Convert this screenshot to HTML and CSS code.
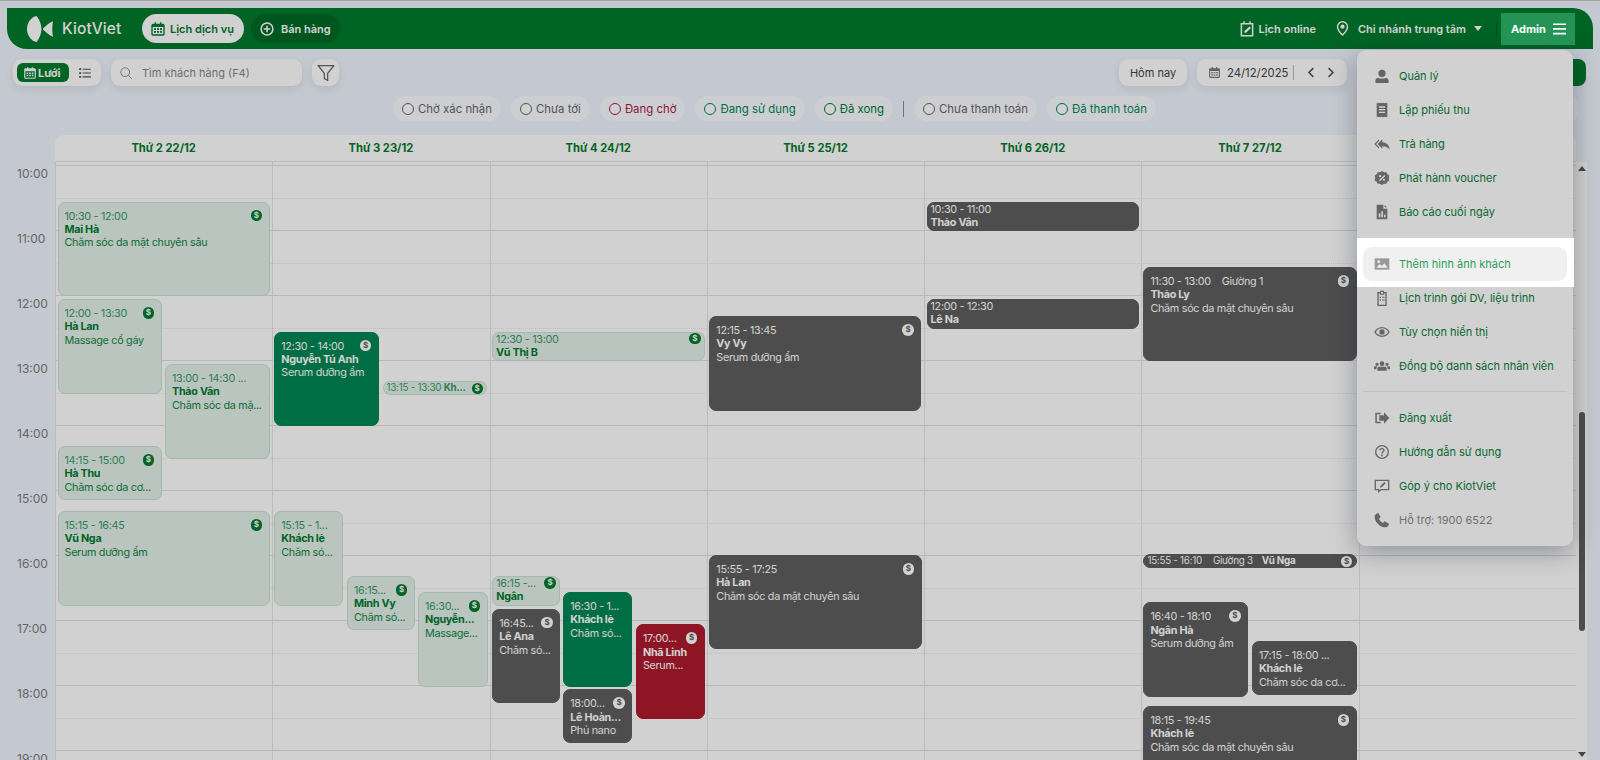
FILE: index.html
```html
<!DOCTYPE html>
<html lang="vi">
<head>
<meta charset="utf-8">
<title>KiotViet - Lịch dịch vụ</title>
<link rel="stylesheet" href="styles.css">
</head>
<body>
<div class="page">
  <header class="topbar">
    <div class="logo">
      <svg class="logo-mark" viewBox="0 0 28 27"><path d="M10 0C4 1 0 7 0 13.500S4 26 10 27c3-4 5-9 5-13.500S13 4 10 0z"/><path d="M27 5.500C23 7 20 10 17 12.500q-1 1 0 2C20 17 23 20 27 21.500c-1-4.500-1-11.500 0-16z"/></svg>
      <span class="logo-text">KiotViet</span>
    </div>
    <a class="pill pill-on"><svg class="ic" viewBox="0 0 24 24"><path d="M7 2h2v2h6V2h2v2h2.500A2.500 2.500 0 0 1 22 6.500v13a2.500 2.500 0 0 1-2.500 2.500h-15A2.500 2.500 0 0 1 2 19.500v-13A2.500 2.500 0 0 1 4.500 4H7V2zM4 9v10.500a.5.5 0 0 0 .5.5h15a.5.5 0 0 0 .5-.5V9H4zm2 2h3v2.500H6V11zm4.500 0h3v2.500h-3V11zM15 11h3v2.500h-3V11zm-9 4h3v2.500H6V15zm4.500 0h3v2.500h-3V15zm4.500 0h3v2.500h-3V15z"/></svg>Lịch dịch vụ</a>
    <a class="pill pill-dark"><svg class="ic" viewBox="0 0 24 24"><path d="M12 2a10 10 0 1 1 0 20 10 10 0 0 1 0-20zm0 2.300a7.700 7.700 0 1 0 0 15.400 7.700 7.700 0 0 0 0-15.400zM10.800 7h2.400v3.800H17v2.400h-3.800V17h-2.400v-3.800H7v-2.400h3.800V7z"/></svg>Bán hàng</a>
    <div class="top-right">
      <a class="top-link online"><svg class="ic" viewBox="0 0 24 24"><path d="M7 1.500h2V4h6V1.500h2V4h3.500v18h-17V4H7V1.500zM5.500 6v14h13V6h-13zm9.800 2.500 2 2-6.500 6.500H8.500v-2.300l6.800-6.200z"/></svg>Lịch online</a>
      <a class="top-link branch"><svg class="ic" viewBox="0 0 24 24"><path d="M12 1.500a8 8 0 0 1 8 8c0 5-5 10.500-8 13-3-2.500-8-8-8-13a8 8 0 0 1 8-8zm0 2a6 6 0 0 0-6 6c0 3.500 3.300 7.700 6 10.300 2.700-2.600 6-6.800 6-10.300a6 6 0 0 0-6-6zm0 3a3 3 0 1 1 0 6 3 3 0 0 1 0-6z"/></svg>Chi nhánh trung tâm<i class="caret"></i></a>
      <span class="top-sep"></span>
      <button class="admin">Admin<svg class="burger" viewBox="0 0 14 12"><path d="M0 0h14v1.800H0zM0 5h14v1.800H0zM0 10h14v1.800H0z"/></svg></button>
    </div>
  </header>

  <div class="toolbar">
    <div class="box view-switch">
      <span class="view-on"><svg class="ic" viewBox="0 0 24 24"><path d="M7 2h2v2h6V2h2v2h2.500A2.500 2.500 0 0 1 22 6.500v13a2.500 2.500 0 0 1-2.500 2.500h-15A2.500 2.500 0 0 1 2 19.500v-13A2.500 2.500 0 0 1 4.500 4H7V2zM4 9v10.500a.5.5 0 0 0 .5.5h15a.5.5 0 0 0 .5-.5V9H4zm2 2h3v2.500H6V11zm4.500 0h3v2.500h-3V11zM15 11h3v2.500h-3V11zm-9 4h3v2.500H6V15zm4.500 0h3v2.500h-3V15zm4.500 0h3v2.500h-3V15z"/></svg>Lưới</span>
      <svg class="ic list-ic" viewBox="0 0 24 24"><path d="M2 4h3.500v3H2zM8 4.500h14v2H8zM2 10.500h3.500v3H2zM8 11h14v2H8zM2 17h3.500v3H2zM8 17.500h14v2H8z"/></svg>
    </div>
    <div class="box search"><svg class="line-ic" viewBox="0 0 24 24"><circle cx="10.500" cy="10.500" r="7.500"/><path d="m16 16 6 6"/></svg>Tìm khách hàng (F4)</div>
    <div class="box square"><svg class="line-ic filter-ic" viewBox="0 0 24 24"><path d="M2.500 3h19L14 12.500V21l-4-2.500v-6z"/></svg></div>
    <div class="box today">Hôm nay</div>
    <div class="box date">
      <svg class="ic" viewBox="0 0 24 24"><path d="M7 2h2v2h6V2h2v2h2.500A2.500 2.500 0 0 1 22 6.500v13a2.500 2.500 0 0 1-2.500 2.500h-15A2.500 2.500 0 0 1 2 19.500v-13A2.500 2.500 0 0 1 4.500 4H7V2zM4 9v10.500a.5.5 0 0 0 .5.5h15a.5.5 0 0 0 .5-.5V9H4zm2 2h3v2.500H6V11zm4.500 0h3v2.500h-3V11zM15 11h3v2.500h-3V11zm-9 4h3v2.500H6V15zm4.500 0h3v2.500h-3V15zm4.500 0h3v2.500h-3V15z"/></svg>
      <span class="date-text">24/12/2025</span><span class="date-sep"></span>
      <svg class="chev" viewBox="0 0 10 14"><path d="M8 1.500 2.500 7 8 12.500"/></svg>
      <svg class="chev" viewBox="0 0 10 14"><path d="M2 1.500 7.500 7 2 12.500"/></svg>
    </div>
    <div class="add-btn"></div>
  </div>

  <div class="chips">
    <span class="chip c-gray"><i></i>Chờ xác nhận</span>
    <span class="chip c-gray"><i></i>Chưa tới</span>
    <span class="chip c-red"><i></i>Đang chờ</span>
    <span class="chip c-teal"><i></i>Đang sử dụng</span>
    <span class="chip c-green"><i></i>Đã xong</span>
    <span class="chip-sep"></span>
    <span class="chip c-gray"><i></i>Chưa thanh toán</span>
    <span class="chip c-teal"><i></i>Đã thanh toán</span>
    <span class="chip-end"></span>
  </div>

  <section class="calendar">
    <div></div>
    <div class="heads">
      <div>Thứ 2 22/12</div><div>Thứ 3 23/12</div><div>Thứ 4 24/12</div><div>Thứ 5 25/12</div><div>Thứ 6 26/12</div><div>Thứ 7 27/12</div><div></div>
    </div>
    <div></div>

    <div class="times">
      <div>10:00</div><div>11:00</div><div>12:00</div><div>13:00</div><div>14:00</div><div>15:00</div><div>16:00</div><div>17:00</div><div>18:00</div><div>19:00</div>
    </div>

    <div class="board">
      <div class="lines">
        <div></div><div></div><div></div><div></div><div></div><div></div><div></div><div></div><div></div><div></div>
      </div>
      <div class="days">
        <div class="day">
          <article class="ev light" style="left:2.500px;top:39.500px;width:212px;height:94.500px"><b class="pay">$</b><p class="t">10:30 - 12:00</p><p class="n">Mai Hà</p><p>Chăm sóc da mặt chuyên sâu</p></article>
          <article class="ev light" style="left:2.500px;top:137px;width:104px;height:94.500px"><b class="pay">$</b><p class="t">12:00 - 13:30</p><p class="n">Hà Lan</p><p>Massage cổ gáy</p></article>
          <article class="ev light" style="left:110px;top:202px;width:104.500px;height:94.500px"><p class="t">13:00 - 14:30 ...</p><p class="n">Thảo Vân</p><p>Chăm sóc da mặ...</p></article>
          <article class="ev light" style="left:2.500px;top:284px;width:104px;height:53.700px"><b class="pay">$</b><p class="t">14:15 - 15:00</p><p class="n">Hà Thu</p><p>Chăm sóc da cơ...</p></article>
          <article class="ev light" style="left:2.500px;top:349px;width:212px;height:94.500px"><b class="pay">$</b><p class="t">15:15 - 16:45</p><p class="n">Vũ Nga</p><p>Serum dưỡng ẩm</p></article>
        </div>
        <div class="day">
          <article class="ev green" style="left:2px;top:169.500px;width:104.700px;height:94.500px"><b class="pay">$</b><p class="t">12:30 - 14:00</p><p class="n">Nguyễn Tú Anh</p><p>Serum dưỡng ẩm</p></article>
          <article class="ev light strip" style="left:110.300px;top:219px;width:104.500px;height:14px"><b class="pay">$</b><p class="t">13:15 - 13:30 <strong>Kh...</strong></p></article>
          <article class="ev light" style="left:2px;top:349px;width:68.700px;height:94.500px"><p class="t">15:15 - 1...</p><p class="n">Khách lẻ</p><p>Chăm só...</p></article>
          <article class="ev light" style="left:74.700px;top:414px;width:68px;height:53.700px"><b class="pay">$</b><p class="t">16:15...</p><p class="n">Minh Vy</p><p>Chăm só...</p></article>
          <article class="ev light" style="left:145.700px;top:430px;width:69.700px;height:94.700px"><b class="pay">$</b><p class="t">16:30...</p><p class="n">Nguyễn...</p><p>Massage...</p></article>
        </div>
        <div class="day">
          <article class="ev light short" style="left:2.500px;top:169.500px;width:213px;height:29.500px"><b class="pay">$</b><p class="t">12:30 - 13:00</p><p class="n">Vũ Thị B</p></article>
          <article class="ev light short" style="left:2.700px;top:414px;width:68px;height:29.700px"><b class="pay">$</b><p class="t">16:15 -...</p><p class="n">Ngân</p></article>
          <article class="ev gray" style="left:2.700px;top:446.700px;width:68px;height:94.600px"><b class="pay">$</b><p class="t">16:45...</p><p class="n">Lê Ana</p><p>Chăm só...</p></article>
          <article class="ev green" style="left:73.700px;top:430px;width:69px;height:94.700px"><p class="t">16:30 - 1...</p><p class="n">Khách lẻ</p><p>Chăm só...</p></article>
          <article class="ev gray" style="left:73.700px;top:527.300px;width:69px;height:53.700px"><b class="pay">$</b><p class="t">18:00...</p><p class="n">Lê Hoàn...</p><p>Phủ nano</p></article>
          <article class="ev red" style="left:146.400px;top:462.300px;width:69px;height:94.700px"><b class="pay">$</b><p class="t">17:00...</p><p class="n">Nhã Linh</p><p>Serum...</p></article>
        </div>
        <div class="day">
          <article class="ev gray" style="left:2.500px;top:154px;width:212px;height:95px"><b class="pay">$</b><p class="t">12:15 - 13:45</p><p class="n">Vy Vy</p><p>Serum dưỡng ẩm</p></article>
          <article class="ev gray" style="left:2.500px;top:393px;width:212.400px;height:94px"><b class="pay">$</b><p class="t">15:55 - 17:25</p><p class="n">Hà Lan</p><p>Chăm sóc da mặt chuyên sâu</p></article>
        </div>
        <div class="day">
          <article class="ev gray short" style="left:2.400px;top:40px;width:212.700px;height:29px"><p class="t">10:30 - 11:00</p><p class="n">Thảo Vân</p></article>
          <article class="ev gray short" style="left:2.400px;top:137px;width:212.700px;height:30px"><p class="t">12:00 - 12:30</p><p class="n">Lê Na</p></article>
        </div>
        <div class="day">
          <article class="ev gray" style="left:2px;top:105px;width:213.300px;height:94px"><b class="pay">$</b><p class="t">11:30 - 13:00<span class="bed">Giường 1</span></p><p class="n">Thảo Ly</p><p>Chăm sóc da mặt chuyên sâu</p></article>
          <article class="ev gray strip" style="left:2px;top:392px;width:213.300px;height:14px"><b class="pay">$</b><p class="t">15:55 - 16:10<span class="bed">Giường 3</span><strong class="who">Vũ Nga</strong></p></article>
          <article class="ev gray" style="left:2px;top:440.300px;width:104.600px;height:94.700px"><b class="pay">$</b><p class="t">16:40 - 18:10</p><p class="n">Ngân Hà</p><p>Serum dưỡng ẩm</p></article>
          <article class="ev gray" style="left:110.600px;top:479px;width:104.700px;height:54px"><p class="t">17:15 - 18:00 ...</p><p class="n">Khách lẻ</p><p>Chăm sóc da cơ...</p></article>
          <article class="ev gray" style="left:2px;top:544px;width:213.300px;height:94.500px"><b class="pay">$</b><p class="t">18:15 - 19:45</p><p class="n">Khách lẻ</p><p>Chăm sóc da mặt chuyên sâu</p></article>
        </div>
        <div class="day"></div>
      </div>
    </div>

    <div class="scroll"><i class="up"></i><i class="thumb"></i><i class="down"></i></div>
  </section>

  <nav class="menu">
    <a class="mi"><svg viewBox="0 0 24 24"><path d="M12 2.500a5.500 5.500 0 1 1 0 11 5.500 5.500 0 0 1 0-11zM6 14.500c1.500 1 3.800 1.300 6 1.300s4.500-.3 6-1.300c2.500.5 4 2.500 4 5V21a1.500 1.500 0 0 1-1.500 1.500h-17A1.500 1.500 0 0 1 2 21v-1.500c0-2.500 1.500-4.500 4-5z"/></svg>Quản lý</a>
    <a class="mi"><svg viewBox="0 0 24 24"><path d="M4 1l1.500 1L7 1l1.500 1L10 1l2 1 2-1 1.500 1L17 1l1.500 1L20 1v22l-1.500-1-1.500 1-1.500-1-1.500 1-2-1-2 1-1.500-1L7 23l-1.500-1L4 23V1zm3.500 5.500v2h9v-2h-9zm0 4v2h9v-2h-9zm0 4v2h9v-2h-9z"/></svg>Lập phiếu thu</a>
    <a class="mi"><svg viewBox="0 0 24 24"><path d="M7.500 5v2.500L3 12l4.500 4.500V19L.5 12 7.500 5zm5 0v4.200c6 .3 10.500 3.800 11 11.300-2-3.500-5.500-5.300-11-5.300V19l-7-7 7-7z"/></svg>Trả hàng</a>
    <a class="mi"><svg viewBox="0 0 24 24"><path d="M12 1.500l3 2 3.500-.2 1.500 3.200 3 1.800-.8 3.700.8 3.700-3 1.800-1.500 3.200-3.500-.2-3 2-3-2-3.500.2L4 17.500l-3-1.800.8-3.700L1 8.300l3-1.800 1.500-3.200 3.500.2 3-2zM15.500 7.500 7.500 15.500l1.500 1.500 8-8-1.500-1.500zM9 7.500a1.700 1.700 0 1 0 0 3.400 1.700 1.700 0 0 0 0-3.400zm6 5.600a1.700 1.700 0 1 0 0 3.400 1.700 1.700 0 0 0 0-3.400z"/></svg>Phát hành voucher</a>
    <a class="mi"><svg viewBox="0 0 24 24"><path d="M4 1h10v6h6v16H4V1zm12 .5L19.500 5H16V1.500zM7 14v6h2.500v-6H7zm4-3v9h2.500v-9H11zm4 5v4h2.500v-4H15z"/></svg>Báo cáo cuối ngày</a>
    <div class="spot">
      <a class="mi mi-on"><svg viewBox="0 0 24 24"><path d="M1 3.500h22v17H1z"/><path class="mount" d="M3.500 17.500l5-5.500 3.500 3 3.500-4 5 6.500zM7 6.500a2 2 0 1 1 0 4 2 2 0 0 1 0-4z"/></svg>Thêm hình ảnh khách</a>
    </div>
    <a class="mi"><svg viewBox="0 0 24 24"><path d="M9 1h6v2h4v21H5V3h4V1zm1.500 2v2.500h3V3h-3zM7 5v17h10V5h-1.500v2h-7V5H7zm1.500 5h2v2h-2v-2zm3.500.300h4v1.500h-4v-1.500zM8.500 14h2v2h-2v-2zm3.500.300h4v1.500h-4v-1.500z"/></svg>Lịch trình gói DV, liệu trình</a>
    <a class="mi"><svg viewBox="0 0 24 24"><path d="M12 4.500c5.500 0 9.500 3.500 11.500 7.500-2 4-6 7.500-11.500 7.500S2.500 16 .5 12c2-4 6-7.500 11.500-7.500zm0 2c-4.200 0-7.500 2.500-9.200 5.500 1.700 3 5 5.500 9.200 5.500s7.500-2.500 9.200-5.500c-1.700-3-5-5.500-9.200-5.500zm0 1.500a4 4 0 1 1 0 8 4 4 0 0 1 0-8z"/></svg>Tùy chọn hiển thị</a>
    <a class="mi"><svg viewBox="0 0 24 24"><path d="M12 5a3.500 3.500 0 1 1 0 7 3.500 3.500 0 0 1 0-7zM4.500 7a2.500 2.500 0 1 1 0 5 2.500 2.500 0 0 1 0-5zm15 0a2.500 2.500 0 1 1 0 5 2.500 2.500 0 0 1 0-5zM7 13h10c1.500 0 2 1.500 2 3v3H5v-3c0-1.500.5-3 2-3zM0 14c0-1 1-1.500 2-1.500h2.500C4 13.500 3.500 15 3.500 17H0v-3zm24 0v3h-3.500c0-2-.5-3.500-1-4.500H22c1 0 2 .5 2 1.500z"/></svg>Đồng bộ danh sách nhân viên</a>
    <hr class="mdiv">
    <a class="mi"><svg viewBox="0 0 24 24"><path d="M2 4h8v2.200H4.200v11.600H10V20H2V4zm13-.5 8 8.500-8 8.500V16H8V8h7V3.500z"/></svg>Đăng xuất</a>
    <a class="mi"><svg viewBox="0 0 24 24"><path d="M12 1.500a10.500 10.500 0 1 1 0 21 10.500 10.500 0 0 1 0-21zm0 2a8.500 8.500 0 1 0 0 17 8.500 8.500 0 0 0 0-17zM12 6c2.500 0 4 1.500 4 3.500 0 1.700-1 2.500-2 3.200-.8.500-1 .8-1 1.800h-2c0-1.800.6-2.600 1.800-3.400.8-.5 1.200-.9 1.200-1.600 0-.9-.8-1.500-2-1.500s-2 .7-2.200 1.700l-2-.4C8.200 7.300 9.800 6 12 6zm-1.200 9.800h2.400v2.400h-2.400v-2.400z"/></svg>Hướng dẫn sử dụng</a>
    <a class="mi"><svg viewBox="0 0 24 24"><path d="M1 2.500h22v16H11l-5 4v-4H1v-16zm2 2v12h5v1.800l2.300-1.800H21v-12H3zm12.500 1.500 2 2-6 6-2.500.5.500-2.500 6-6z"/></svg>Góp ý cho KiotViet</a>
    <a class="mi mi-muted"><svg viewBox="0 0 24 24"><path d="M6.500 1.500 10 8 7.500 10.500c1.300 2.800 3.200 4.700 6 6L16 14l6.500 3.500c-.3 3-2.500 5.500-5.500 5.500C9 23 1 15 1 7c0-3 2.500-5.200 5.500-5.500z"/></svg>Hỗ trợ: 1900 6522</a>
  </nav>
</div>
</body>
</html>
```
FILE: styles.css
```css
* { box-sizing: border-box; }
html, body { margin: 0; height: 760px; overflow: hidden; }
body { font-family: Inter, "Noto Sans", sans-serif; font-size: 12px; color: #333; background: #f0f5fe; }
p { margin: 0; }

.page { height: 760px; display: flex; flex-direction: column; border-top: 1px solid #c9c9c9; }

/* top bar */
.topbar { height: 41px; margin: 7px 7px 0; flex: none; display: flex; align-items: center; background: #007a2e; border-radius: 0 20px 0 20px; color: #fff; padding-left: 20px; }
.logo { display: flex; align-items: center; width: 115px; }
.logo-mark { width: 27px; height: 26px; fill: #fff; }
.logo-text { margin-left: 8px; font-size: 15.500px; font-weight: 500; letter-spacing: .1px; }
.ic { width: 14px; height: 14px; fill: currentColor; flex: none; }
.line-ic { width: 14px; height: 14px; flex: none; fill: none; stroke: currentColor; stroke-width: 1.600; stroke-linejoin: round; }
.filter-ic { width: 20px; height: 20px; stroke-width: 1.500; }
.pill { height: 29px; display: flex; align-items: center; border-radius: 15px; font-weight: 600; font-size: 11px; }
.pill .ic { width: 16px; height: 16px; }
.pill-on { width: 102px; gap: 4px; padding-left: 8px; background: #fff; color: #007a2e; margin-right: 7px; }
.pill-dark { width: 89px; gap: 6px; padding-left: 8px; background: #006a27; color: #fff; }
.top-right { margin-left: auto; display: flex; align-items: center; height: 100%; padding-right: 18px; }
.top-link { display: flex; align-items: center; font-weight: 600; font-size: 11px; }
.online { gap: 3px; }
.online .ic { width: 18px; height: 18px; }
.branch { margin-left: 18px; gap: 7px; }
.branch .ic { width: 17px; height: 17px; }
.caret { width: 0; height: 0; margin-left: 1px; border: 4px solid transparent; border-top: 5px solid #fff; border-bottom: 0; }
.top-sep { width: 1px; height: 14px; background: #005c23; margin: 0 4px 0 14px; }
.admin { position: relative; z-index: 2; width: 74px; height: 32px; border: 0; padding: 0 0 0 10px; display: flex; align-items: center; gap: 7px; background: #249456; color: #fff; font: 700 11px Inter, sans-serif; }
.burger { width: 13px; height: 12px; fill: #fff; }

/* toolbar */
.toolbar { flex: none; display: flex; gap: 10px; height: 27px; margin-top: 10px; padding: 0 14px 0 13px; }
.box { display: flex; align-items: center; background: #fff; border-radius: 9px; box-shadow: 0 3px 10px rgba(60, 70, 90, .12); color: #444; }
.view-switch { width: 88px; padding-left: 4px; }
.view-on { width: 52px; height: 19px; display: flex; align-items: center; gap: 1px; padding-left: 6px; border-radius: 6px; background: #007a2e; color: #fff; font-weight: 700; font-size: 11px; }
.list-ic { margin-left: 9px; color: #555; }
.search { width: 191px; padding-left: 8px; gap: 9px; color: #888; font-size: 11px; }
.square { width: 27px; justify-content: center; color: #666; }
.today { width: 68px; justify-content: center; margin-left: auto; font-size: 11px; }
.date { width: 150px; padding-left: 11px; }
.date .ic { color: #777; width: 13px; height: 13px; }
.date-text { margin-left: 6px; font-size: 11.300px; }
.date-sep { width: 1px; height: 15px; background: #bbb; margin: 0 13px 0 5px; }
.chev { width: 9px; height: 13px; margin-right: 12px; fill: none; stroke: #555; stroke-width: 2; }
.add-btn { width: 229px; background: #007a2e; border-radius: 8px; }

/* status chips */
.chips { flex: none; display: flex; gap: 10px; align-items: center; height: 25px; margin-top: 10px; padding-left: 393px; }
.chip { height: 25px; display: flex; align-items: center; gap: 4px; padding: 0 9px; border-radius: 13px; background: #fbfcff; font-size: 11.400px; white-space: nowrap; }
.chip i { width: 12px; height: 12px; border: 1px solid currentColor; border-radius: 50%; background: #fff; }
.c-gray { color: #676767; }
.c-red { color: #ad1a4a; }
.c-teal { color: #00875a; }
.c-green { color: #007a2e; }
.chip-sep { width: 1px; height: 16px; background: #8f8f8f; }
.chip-end { width: 160px; height: 25px; margin-left: auto; margin-right: 22px; background: #fbfcff; border-radius: 8px; }

/* calendar */
.calendar { flex: 1; min-height: 0; margin-top: 14px; display: grid; grid-template-columns: 55px 1521px 11px; grid-template-rows: 27px 1fr; }
.heads { display: grid; grid-template-columns: repeat(7, 1fr); align-items: center; background: #fff; border-radius: 9px 9px 0 0; border-bottom: 1px solid #e4e4e4; text-align: center; color: #007a2e; font-weight: 700; font-size: 11.200px; }
.times { overflow: hidden; padding: 5px 0 0 17px; color: #7c7c7c; font-size: 12px; }
.times div { height: 65px; line-height: 13px; }
.board { position: relative; overflow: hidden; background: #fff; }
.lines { padding-top: 3px; }
.lines div { position: relative; height: 65px; border-top: 1px solid #e0e0e0; }
.lines div::after { content: ""; position: absolute; left: 0; right: 0; top: 31.500px; border-top: 1px dotted #e8e8e8; }
.days { position: absolute; inset: 0; display: grid; grid-template-columns: repeat(7, 1fr); }
.day { position: relative; border-left: 1px solid #e6e6e6; }

/* appointments */
.ev { position: absolute; overflow: hidden; margin-left: -1px; padding: 7px 6px 0; border: 1px solid; border-radius: 7px; font-size: 10.800px; letter-spacing: -.3px; line-height: 13.400px; white-space: nowrap; }
.ev .n { font-weight: 700; }
.ev strong { font-weight: 700; }
.pay { position: absolute; top: 7px; right: 6.500px; width: 11.500px; height: 11.500px; border-radius: 50%; font-size: 8px; letter-spacing: 0; line-height: 11.500px; text-align: center; font-weight: 700; }
.light { background: #e3f1e9; border-color: #c8e3d3; color: #128544; }
.light .n { color: #007a2e; }
.light .t { color: #3b9a69; }
.light .pay { background: #007a2e; color: #fff; }
.green { background: #008754; border-color: #008754; color: #fff; }
.gray { background: #5e5e5e; border-color: #5e5e5e; color: #fff; }
.red { background: #ad1a2d; border-color: #ad1a2d; color: #fff; }
.green .pay, .gray .pay, .red .pay { background: #fff; color: #5e5e5e; }
.short { padding: 0 3px; }
.short .pay { top: 0; right: 3.500px; }
.strip { padding: 0 3px; border-radius: 7px; font-size: 9.800px; letter-spacing: -.25px; line-height: 12px; }
.strip .pay { top: .5px; right: 3.500px; width: 11px; height: 11px; line-height: 11px; }
.bed { margin-left: 11px; }
.who { margin-left: 9px; }

/* scrollbar */
.scroll { display: flex; flex-direction: column; align-items: center; background: #fff; padding-top: 4px; overflow: hidden; }
.up, .down { width: 0; height: 0; border: 4px solid transparent; }
.up { border-bottom: 5px solid #555; border-top: 0; }
.down { border-top: 5px solid #555; border-bottom: 0; margin-top: 121px; }
.thumb { width: 6px; height: 219px; margin-top: 241px; background: #5e5e5e; border-radius: 3px; }

/* admin menu */
.menu { position: absolute; left: 1357px; top: 50px; width: 216px; height: 496px; padding: 9px 6px; background: #fff; border-radius: 9px; box-shadow: 0 6px 26px rgba(30, 35, 50, .35); }
.mi { height: 34px; display: flex; align-items: center; gap: 9px; padding-left: 11px; border-radius: 9px; color: #0a7f3c; font-size: 11px; white-space: nowrap; }
.mi svg { width: 16px; height: 16px; flex: none; fill: #7d7d7d; }
.mi-muted { color: #8a8a8a; }
.mdiv { margin: 8px 0 9px; height: 1px; border: 0; background: #ececec; }
.spot { position: relative; z-index: 1; margin: 9px -6px -6px; width: 217px; padding: 9px 7px 6px 6px; background: #fff; box-shadow: 0 0 0 3000px rgba(0, 0, 0, .18); }
.mi-on { background: #f0f0f0; color: #2a9d5c; }
.mi-on svg { fill: #999; }
.mi-on svg .mount { fill: #f0f0f0; }
```
